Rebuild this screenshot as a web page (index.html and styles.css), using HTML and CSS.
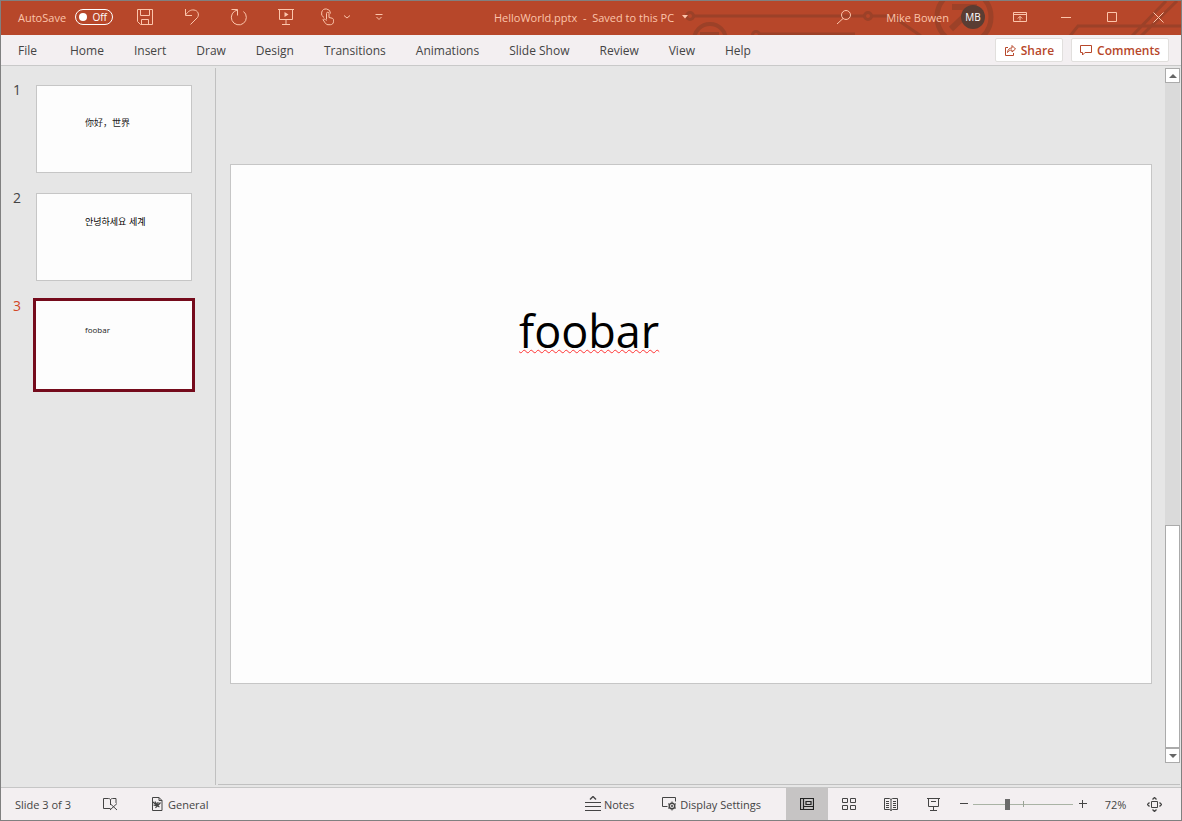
FILE: index.html
```html
<!DOCTYPE html>
<html lang="en">
<head>
<meta charset="utf-8">
<title>HelloWorld.pptx</title>
<link rel="stylesheet" href="styles.css">
</head>
<body>
<div class="window">
  <header class="titlebar">
    <svg class="circuit" width="502" height="34" viewBox="680 1 502 34" aria-hidden="true">
      <g fill="none" stroke="#9c4128" stroke-width="3">
        <circle cx="691" cy="16" r="3.5"/><path d="M695 16H865M873 16H893L922 36"/><circle cx="869" cy="16" r="3.5"/>
        <circle cx="711" cy="40" r="16" stroke-width="4"/><path d="M701 34H720" stroke-width="4"/>
        <circle cx="757" cy="35" r="3.5"/><path d="M761 34H856"/>
        <circle cx="965" cy="17" r="27" stroke-width="5"/><path d="M953 7H975V28M973 9L952 29" stroke-width="6"/>
        <path d="M1071 36L1079 26H1182M1133 36L1167 1M1142 36L1178 1"/>
      </g>
    </svg>
    <div class="quick">
      <label class="autosave">AutoSave
        <span class="switch"><input type="checkbox" role="switch" aria-label="AutoSave"><i></i><span>Off</span></span>
      </label>
      <button class="tool" aria-label="Save"><svg width="18" height="18" viewBox="0 0 18 18"><path d="M1.5 1.5h15v15h-12l-3-3zM4.5 1.5v6h9v-6M5.500 16.500v-5h7v5"/></svg></button>
      <button class="tool" aria-label="Undo"><svg width="18" height="18" viewBox="0 0 18 18"><path d="M2.500 1v6.500h6.500M2.500 7C5 3.500 7.500 1.500 11 2c4 .5 5.500 4.500 3.500 7.500L7.500 16.500"/></svg></button>
      <button class="tool" aria-label="Redo"><svg width="18" height="18" viewBox="0 0 18 18"><path d="M1.500 1.500h6v6M7.500 2A7.500 7.500 0 1 0 13.500 3.500"/></svg></button>
      <button class="tool" aria-label="Start slide show"><svg width="18" height="18" viewBox="0 0 18 18"><path d="M1 1.500h16M2.500 1.500v10h13v-10M9 11.500v5M5 16.500h8"/><path class="solid" d="M7.500 4l4 2.500-4 2.500z"/></svg></button>
      <button class="tool touch" aria-label="Touch mode"><svg width="14" height="18" viewBox="0 0 14 18"><path d="M3 9.500A4.500 4.500 0 1 1 9.500 5.500M5.500 11.500v-6a1.200 1.200 0 0 1 2.500 0v4l3 .7c1.200.3 1.500 1 1.500 2v1.500c0 1.800-1.500 3-3 3H7c-1.500 0-2.200-1-3-2l-2-3c.5-1 2-1 3.500 1"/></svg><svg width="8" height="6" viewBox="0 0 8 6"><path d="M1 1.500l3 2.500 3-2.500"/></svg></button>
      <button class="tool more" aria-label="Customize toolbar"><svg width="8" height="8" viewBox="0 0 8 8"><path d="M.5 1.500h7M1.500 4L4 6.500 6.500 4"/></svg></button>
    </div>
    <button class="doc">HelloWorld.pptx&nbsp; -&nbsp; Saved to this PC<svg width="6" height="4" viewBox="0 0 6 4"><path class="solid" d="M0 0h6L3 3.500z"/></svg></button>
    <div class="account">
      <button class="search" aria-label="Search"><svg width="16" height="16" viewBox="0 0 16 16"><circle cx="10" cy="6" r="4.500"/><path d="M7 9.500L1 15"/></svg></button>
      <button class="user"><span>Mike Bowen</span><span class="avatar">MB</span></button>
      <button class="win" aria-label="Ribbon display options"><svg width="14" height="12" viewBox="0 0 14 12"><path d="M.5 1.500h13v9H.5zM.5 3.500h13M7 9.500v-4M4.800 7.500L7 5.300l2.200 2.200"/></svg></button>
      <button class="win" aria-label="Minimize"><svg width="10" height="10" viewBox="0 0 10 10"><path d="M0 5.500h10"/></svg></button>
      <button class="win" aria-label="Maximize"><svg width="10" height="10" viewBox="0 0 10 10"><path d="M.5.500h9v9h-9z"/></svg></button>
      <button class="win" aria-label="Close"><svg width="11" height="11" viewBox="0 0 11 11"><path d="M.5.500l10 10M10.500.500l-10 10"/></svg></button>
    </div>
  </header>
  <nav class="ribbon">
    <div class="tabs">
      <button class="file">File</button><button>Home</button><button>Insert</button><button>Draw</button><button>Design</button><button>Transitions</button><button>Animations</button><button>Slide Show</button><button>Review</button><button>View</button><button>Help</button>
    </div>
    <div class="actions">
      <button><svg width="12" height="12" viewBox="0 0 12 12"><path d="M4 3.500H1.500v8h8V9M3.500 8.500c.3-3 2-4.500 4.500-4.500V1.500L11.500 5 8 8V6C6 6 4.500 7 3.500 8.500z"/></svg>Share</button>
      <button><svg width="12" height="12" viewBox="0 0 12 12"><path d="M.5 1.500h11v7H5l-2.500 2.500V8.500h-2z"/></svg>Comments</button>
    </div>
  </nav>
  <main class="main">
    <ol class="thumbs">
      <li><span class="num">1</span><button class="thumb zh" lang="zh">你好，世界</button></li>
      <li><span class="num">2</span><button class="thumb ko" lang="ko">안녕하세요 세계</button></li>
      <li class="current"><span class="num">3</span><button class="thumb">foobar</button></li>
    </ol>
    <section class="workspace">
      <div class="stage"><article class="slide"><span class="word">foobar</span></article></div>
      <div class="scroll">
        <button aria-label="Scroll up"><svg width="8" height="4" viewBox="0 0 8 4"><path class="solid" d="M0 4l4-4 4 4z"/></svg></button>
        <div class="track"></div>
        <div class="grip"></div>
        <button aria-label="Scroll down"><svg width="8" height="4" viewBox="0 0 8 4"><path class="solid" d="M0 0l4 4 4-4z"/></svg></button>
      </div>
    </section>
  </main>
  <footer class="status">
    <div class="info">
      <span>Slide 3 of 3</span>
      <button aria-label="Proofing"><svg width="15" height="14" viewBox="0 0 15 14"><path d="M7.500 11.500H.5v-10h5c1 0 1.500.5 2 1 .5-.5 1-1 2-1h3.500V6M7.500 2.500V8M7 6.500l7 6.500M14 6.500L7 13"/></svg></button>
      <button class="general"><svg width="11" height="14" viewBox="0 0 11 14"><path d="M.5.500h6.500l3 3v10H.5zM7 .500v3h3"/><path d="M1 5l4 3.500M3 4.500l2.500 4M5.500 9l.5-4M5.500 9L8.500 5.500M5.500 9l2 1M1.500 8l3.500 1-1.500 2" stroke-width="1.200"/></svg>General</button>
    </div>
    <div class="views">
      <button class="notes"><svg width="16" height="16" viewBox="0 0 16 16"><path d="M5 3.500l3-3 3 3" stroke-width="1.400"/><path d="M0 6.500h16M0 10.500h16M0 14.500h16"/></svg>Notes</button>
      <button class="display"><svg width="15" height="14" viewBox="0 0 15 14"><path d="M5.500 9.500h-5v-9h13v4M2.500 9.500H5"/><circle cx="10" cy="9" r="2.800" stroke-width="1.400"/><circle cx="10" cy="9" r=".8"/><path d="M10 4.500V6M10 12v1.500M6 6.700l1.500.8M12.500 10.500l1.500.8M6 11.300l1.500-.8M12.500 7.500l1.500-.8"/></svg>Display Settings</button>
      <button class="view selected" aria-label="Normal view"><svg width="14" height="12" viewBox="0 0 14 12"><path d="M.5.500h13v11H.5zM3.500.500v11M3.500 8.500h10M6 3.500h5v3H6z" stroke-width="1.200"/></svg></button>
      <button class="view" aria-label="Slide sorter"><svg width="14" height="12" viewBox="0 0 14 12"><path d="M.5.500h5v4h-5zM8.500.500h5v4h-5zM.5 7.500h5v4h-5zM8.500 7.500h5v4h-5z"/></svg></button>
      <button class="view" aria-label="Reading view"><svg width="14" height="13" viewBox="0 0 14 13"><path d="M.5.500h5L7 1.500 8.500.500h5v11h-5L7 12.500l-1.500-1h-5zM7 1.500v11M2 3.500h3M2 5.500h3M2 7.500h3M2 9.500h3M9 3.500h3M9 5.500h3M9 7.500h3M9 9.500h3"/></svg></button>
      <button class="view" aria-label="Slide show"><svg width="13" height="13" viewBox="0 0 13 13"><path d="M0 .500h13M1.500.500v8h10v-8M4 3.500h5M6.500 8.500v4M3 12.500h7"/></svg></button>
      <button class="step" aria-label="Zoom out"><svg width="8" height="8" viewBox="0 0 8 8"><path d="M0 3.500h8"/></svg></button>
      <input class="zoom" type="range" min="0" max="100" value="34" aria-label="Zoom">
      <button class="step" aria-label="Zoom in"><svg width="8" height="8" viewBox="0 0 8 8"><path d="M0 3.500h8M3.500 0v8"/></svg></button>
      <button class="percent">72%</button>
      <button class="fit" aria-label="Fit slide to window"><svg width="15" height="15" viewBox="0 0 15 15"><path d="M4.500 4.500h6v6h-6z"/><path d="M5.500 2.500l2-2 2 2M5.500 12.500l2 2 2-2M2.500 5.500l-2 2 2 2M12.500 5.500l2 2-2 2" stroke-width="1.300"/></svg></button>
    </div>
  </footer>
</div>
</body>
</html>
```

FILE: styles.css
```css
* { box-sizing: border-box; }
body { margin: 0; font-family: "Open Sans", "Noto Sans", sans-serif; font-size: 12px; color: #444; }
button { font: inherit; color: inherit; background: none; border: 0; padding: 0; display: flex; align-items: center; justify-content: center; white-space: nowrap; }
svg { fill: none; stroke: currentColor; stroke-width: 1; flex: none; }
svg .solid { fill: currentColor; stroke: none; }

.window { height: 100vh; display: flex; flex-direction: column; border: 1px solid #808080; background: #e6e6e6; overflow: hidden; }

.titlebar { position: relative; flex: none; height: 34px; display: grid; grid-template-columns: 1fr auto 1fr; padding-bottom: 2px; background: #b7472a; color: #fcc5ab; }
.circuit { position: absolute; right: 0; top: 0; }
.quick, .doc, .account { position: relative; display: flex; align-items: center; }
.quick { padding-left: 17px; }
.autosave { display: flex; align-items: center; gap: 9px; width: 103px; font-size: 11px; }
.switch { position: relative; display: flex; align-items: center; justify-content: space-between; width: 38px; height: 16px; padding: 0 5px 0 3px; border: 1px solid #fff; border-radius: 8px; color: #fff; font-size: 10px; }
.switch input { position: absolute; inset: 0; width: 100%; height: 100%; margin: 0; opacity: 0; }
.switch i { width: 8px; height: 8px; border-radius: 50%; background: #fff; }
.tool { width: 47px; height: 32px; }
.touch { gap: 8px; width: 54px; }
.more { width: 32px; }
.doc { gap: 8px; font-size: 11px; }
.account { justify-content: flex-end; }
.search { width: 30px; height: 32px; margin-right: 27px; }
.user { gap: 12px; margin-right: 12px; font-size: 11px; }
.avatar { display: flex; align-items: center; justify-content: center; width: 24px; height: 24px; border-radius: 50%; background: #5a3d33; color: #fff; font-size: 10px; }
.win { width: 46px; height: 32px; }

.ribbon { flex: none; height: 31px; display: flex; align-items: center; justify-content: space-between; padding: 0 12px 0 17px; background: #f3eff1; border-bottom: 1px solid #c9c9c9; }
.tabs { display: flex; gap: 30px; }
.file { margin-right: 3px; }
.actions { display: flex; gap: 8px; color: #b7472a; font-weight: 600; }
.actions button { gap: 5px; height: 24px; padding: 0 8px; background: #fff; border: 1px solid #e1dfdd; border-radius: 2px; }

.main { flex: 1; min-height: 0; display: flex; padding: 2px 1px 2px 0; }
.thumbs { flex: none; width: 215px; margin: 0; padding: 17px 0 0 12px; list-style: none; border-right: 1px solid #c0c0c0; }
.thumbs li { display: flex; height: 108px; }
.num { width: 23px; font-size: 14px; line-height: 10px; }
.thumb { width: 156px; height: 88px; padding: 0 0 16px 48px; justify-content: flex-start; background: #fdfdfd; border: 1px solid #c6c6c6; color: #222; font-size: 8px; }
.zh, .ko { font-family: "Noto Sans CJK SC", sans-serif; font-size: 9px; padding-bottom: 14px; }
.ko { font-family: "Noto Sans CJK KR", sans-serif; padding-bottom: 32px; color: #000; }
.current .num { color: #d24726; }
.current .thumb { outline: 3px solid #750b1c; border-color: #fdfdfd; padding-bottom: 32px; }

.workspace { flex: 1; min-width: 0; display: flex; margin-left: 2px; border-bottom: 1px solid #c0c0c0; }
.stage { flex: 1; min-width: 0; display: flex; align-items: center; padding: 0 13px 4px 12px; }
.slide { width: 100%; aspect-ratio: 922 / 520; padding: 135px 0 0 288px; background: #fdfdfd; border: 1px solid #c6c6c6; }
.word { color: #000; font-size: 45px; line-height: 62px; text-decoration: underline wavy #f33 1px; text-underline-offset: 1px; text-decoration-skip-ink: none; }
.scroll { flex: none; width: 15px; display: flex; flex-direction: column; margin-bottom: 21px; background: #dadada; color: #666; }
.scroll button { height: 15px; flex: none; background: #fff; border: 1px solid #ababab; }
.track { flex: 2; }
.grip { flex: 1; background: #fff; border: 1px solid #ababab; }

.status { flex: none; height: 33px; display: flex; justify-content: space-between; padding: 0 12px 0 14px; background: #f3eff1; border-top: 1px solid #c6c6c6; font-size: 11px; }
.info, .views { display: flex; align-items: center; }
.info { gap: 32px; }
.general { gap: 5px; margin-left: 2px; }
.notes { gap: 3px; margin-right: 28px; }
.display { gap: 3px; margin-right: 25px; }
.view { width: 42px; height: 100%; }
.selected { background: #c6c4c4; color: #222; }
.step { width: 19px; height: 20px; }
.zoom { appearance: none; width: 100px; height: 12px; margin: 0; background: linear-gradient(#9aa396, #9aa396) 50px 3px / 1px 6px no-repeat, linear-gradient(#a9b3a5, #a9b3a5) 0 6px / 100% 1px no-repeat; }
.zoom::-webkit-slider-thumb { appearance: none; width: 5px; height: 11px; background: #6b6b6b; border: 0; }
.percent { width: 47px; }
.fit { width: 30px; }
```
